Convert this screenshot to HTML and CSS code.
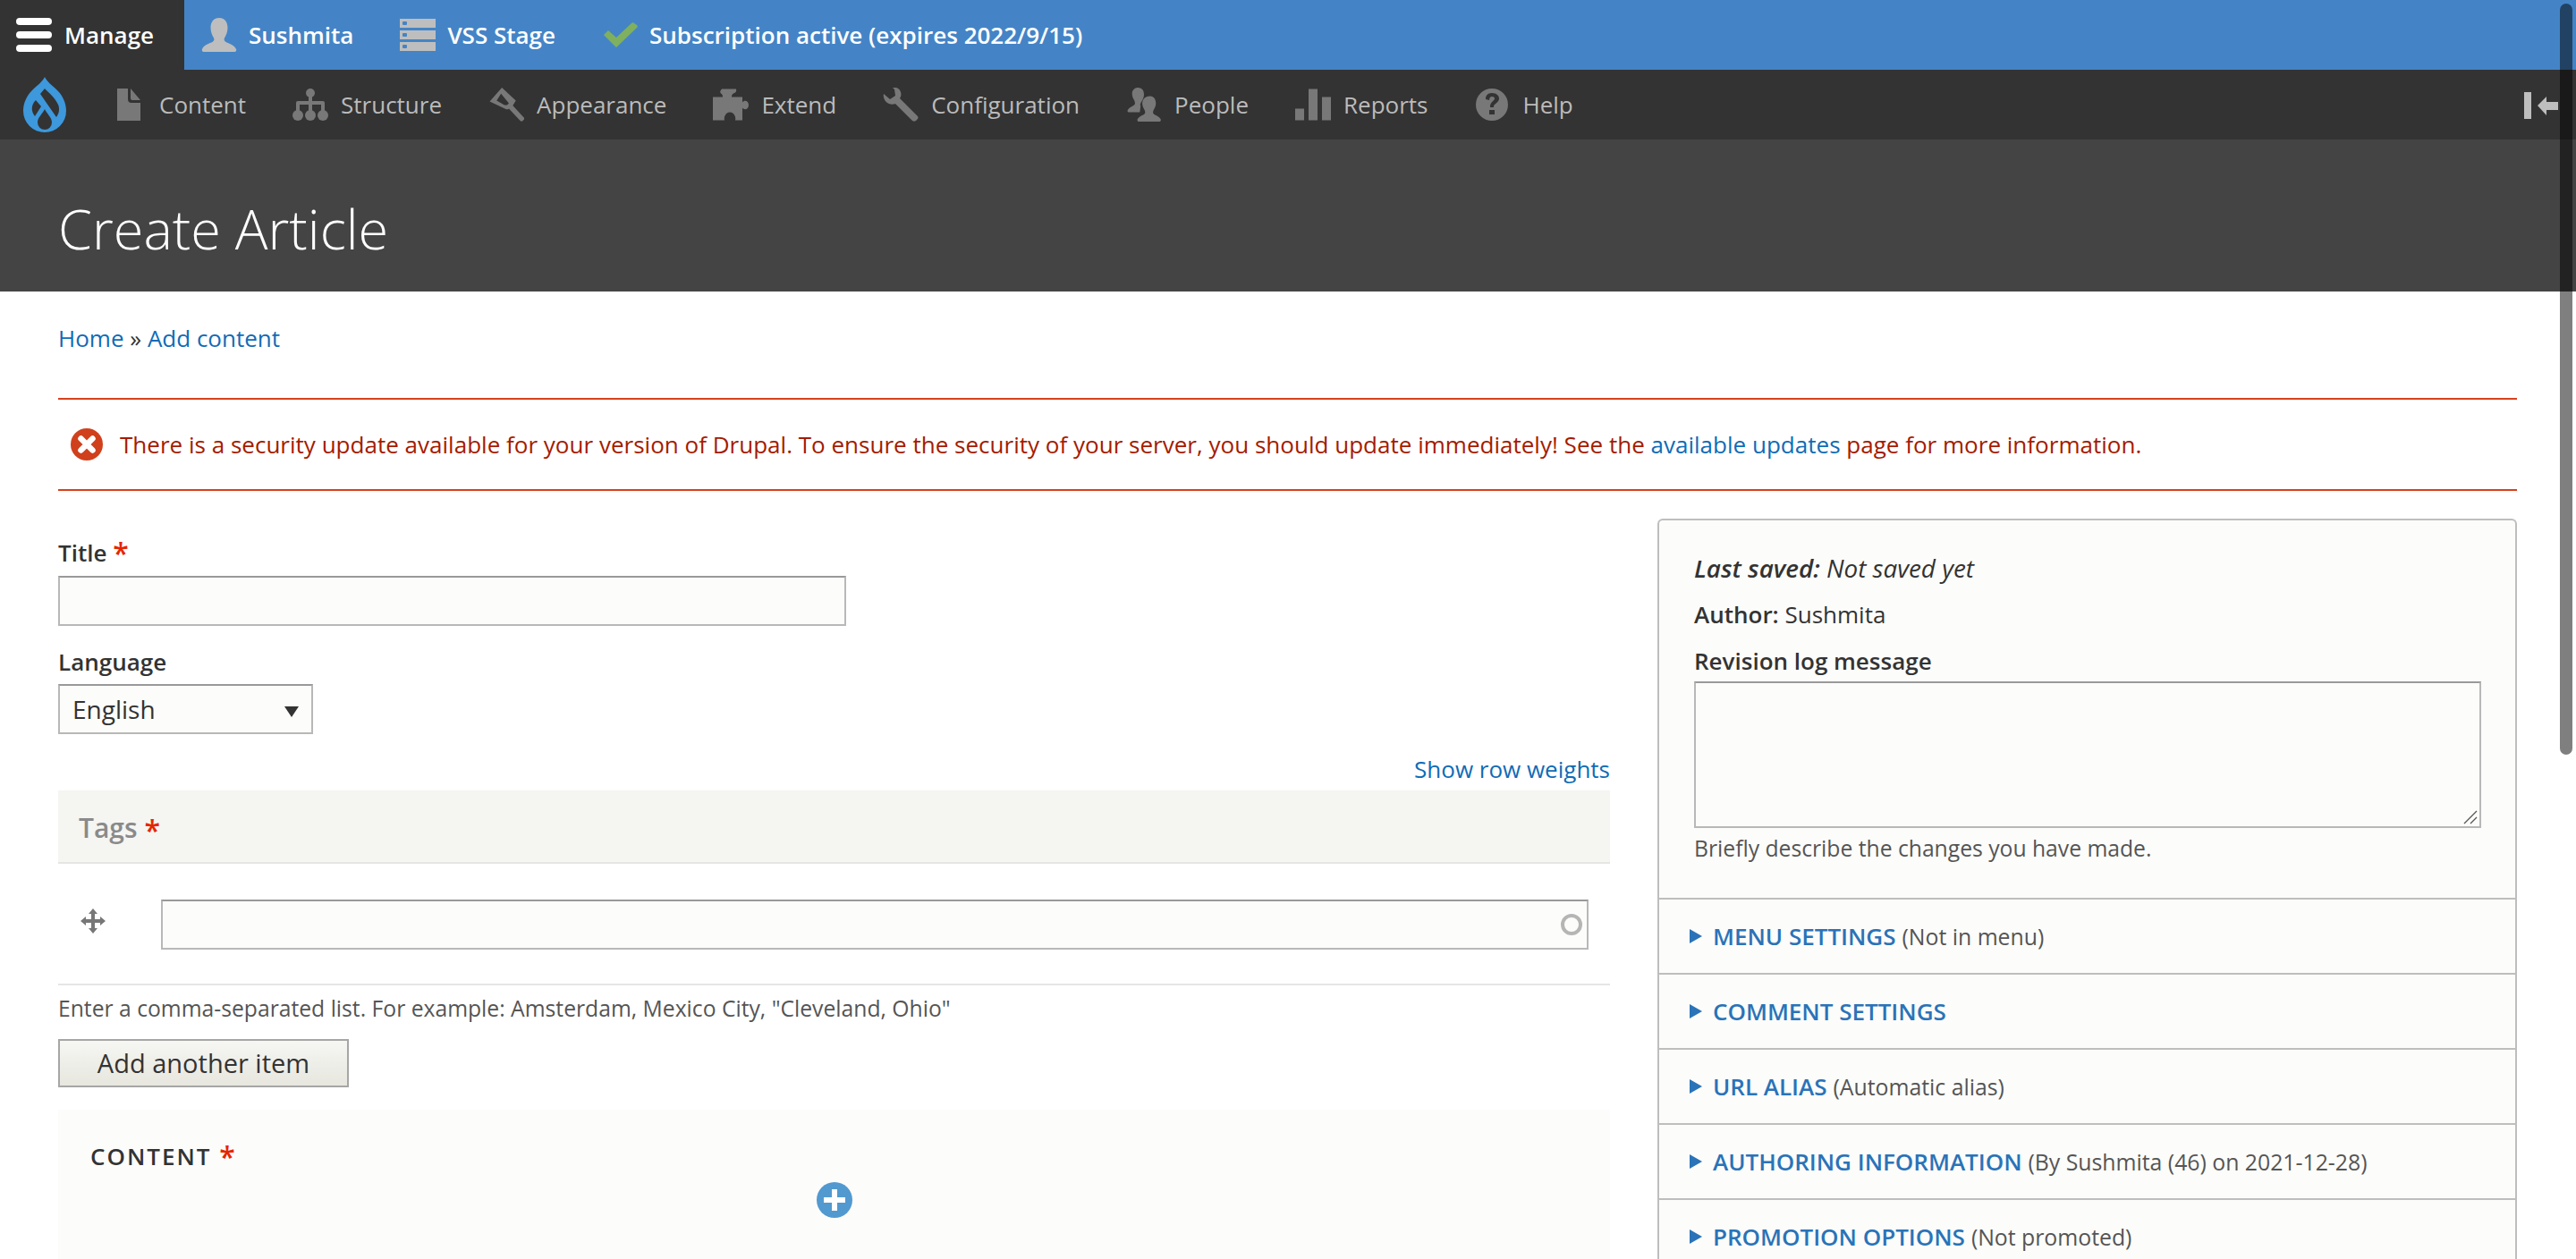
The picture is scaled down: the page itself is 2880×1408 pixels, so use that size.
FILE: index.html
```html
<!DOCTYPE html>
<html lang="en">
<head>
<meta charset="utf-8">
<title>Create Article</title>
<link rel="stylesheet" href="styles.css">
</head>
<body>
<div class="app">
  <div class="topbar">
    <a class="manage">
      <svg class="ico-burger" viewBox="0 0 40 38"><rect y="0" width="40" height="8" rx="4"/><rect y="15" width="40" height="8" rx="4"/><rect y="30" width="40" height="8" rx="4"/></svg>
      <span>Manage</span>
    </a>
    <a class="top-item top-user">
      <svg class="ico-top" viewBox="0 0 40 38"><path d="M20 0c6 0 9.500 4.500 9.500 11 0 5-2 9-3.500 11.500-1 2 0 4 2.500 5 4 1.500 9 3.500 10.500 7.500.5 1.500 0 3-1.500 3H2.500c-1.500 0-2-1.500-1.500-3 1.500-4 6.500-6 10.500-7.500 2.500-1 3.500-3 2.500-5C12.500 20 10.500 16 10.500 11 10.500 4.500 14 0 20 0z"/></svg>
      <span>Sushmita</span>
    </a>
    <a class="top-item top-stage">
      <svg class="ico-top" viewBox="0 0 40 36"><rect y="0" width="40" height="10"/><rect y="13" width="40" height="10"/><rect y="26" width="40" height="10"/><g class="srv-led"><rect x="3" y="3" width="5" height="4" rx="1"/><rect x="3" y="16" width="5" height="4" rx="1"/><rect x="3" y="29" width="5" height="4" rx="1"/></g></svg>
      <span>VSS Stage</span>
    </a>
    <a class="top-item">
      <svg class="ico-top ico-check" viewBox="0 0 40 28"><path d="M2 14l5-5 9 8L33 1c1-1 2-1 3 0l3 2c1 1 1 2 0 3L16 28z"/></svg>
      <span>Subscription active (expires 2022/9/15)</span>
    </a>
  </div>
  <div class="tray">
    <svg class="logo" viewBox="0 0 48 62">
      <path d="M24 0C26 5 32 9 38 15C44 21 48 29 48 38A24 24 0 0 1 0 38C0 29 4 21 10 15C16 9 22 5 24 0Z"/>
      <g class="logo-cut">
        <path d="M24 13C29 18 36 24 39 31C41 36 40 41 37 45L19 19Z"/>
        <path d="M14 26L20 33L13 44C9 39 8 32 14 26Z"/>
        <path d="M24 36C26 41 32 45 32 51A8 8 0 0 1 16 51C16 45 22 41 24 36Z"/>
      </g>
    </svg>
    <a class="tray-item">
      <svg class="ico-tray" viewBox="0 0 40 36"><path d="M7 0h12v12q0 4 4 4h10v20H7zM22 0l11 13H24q-2 0-2-2z"/></svg>
      <span>Content</span>
    </a>
    <a class="tray-item">
      <svg class="ico-tray" viewBox="0 0 40 36"><circle cx="20" cy="5" r="5"/><rect x="18" y="5" width="4" height="24"/><path d="M6 14h28q2 0 2 2v12h-4v-10H8v10H4V16q0-2 2-2z"/><circle cx="6" cy="30" r="6"/><circle cx="20" cy="30" r="6"/><circle cx="34" cy="30" r="6"/></svg>
      <span>Structure</span>
    </a>
    <a class="tray-item">
      <svg class="ico-tray" viewBox="0 0 40 39"><path fill-rule="evenodd" d="M15 0L31 15l-5 8-4 2-2 0L1 16zM14 7L9 15l9 5 3 0 2-2z"/><path d="M23 24l4-4 13 14c1 1 1 2 0 3l-1 1c-1 1-2 1-3 0z"/></svg>
      <span>Appearance</span>
    </a>
    <a class="tray-item">
      <svg class="ico-tray" viewBox="0 0 40 35"><path d="M10 0h16q1 4-3 5c-2 1-2 3-2 4h12v6c2-3 7-2 7 3s-5 6-7 3v14h-8c1-3-1-9-6-9s-7 6-6 9H0V9h11c0-1 0-3-2-4Q7 3 10 0z"/></svg>
      <span>Extend</span>
    </a>
    <a class="tray-item">
      <svg class="ico-tray" viewBox="0 0 40 38"><path d="M11 0c4-1 8 1 9 5 1 3 0 5-1 7l19 19c2 2 2 3 0 5l-1 1c-2 1-3 1-5-1L14 18c-3 1-6 1-9-1C2 15 0 11 1 7l7 6 6-4-1-7z"/></svg>
      <span>Configuration</span>
    </a>
    <a class="tray-item">
      <svg class="ico-tray" viewBox="0 0 40 40"><path d="M13 0c5 0 7 4 7 8 0 3-1 5-2 7-2 3-3 5-2 7l-1 7H3c-2 0-3-1-2-3 2-3 6-4 8-6 1-2 0-4-1-6-1-2-2-4-2-7 0-4 3-7 7-7z"/><path d="M27 10c5 0 7 4 7 9 0 3-2 6-3 8-1 3 0 4 2 5 3 1 6 3 7 6l-1 2H13l-1-2c1-3 4-5 7-6 2-1 3-2 2-5-1-2-3-5-3-8 0-5 3-9 9-9z"/></svg>
      <span>People</span>
    </a>
    <a class="tray-item">
      <svg class="ico-tray" viewBox="0 0 40 35"><rect y="22" width="10" height="13"/><rect x="15" width="10" height="35"/><rect x="30" y="9" width="10" height="26"/></svg>
      <span>Reports</span>
    </a>
    <a class="tray-item">
      <svg class="ico-tray" viewBox="0 0 40 36"><path fill-rule="evenodd" d="M20 0a18 18 0 1 1 0 36 18 18 0 0 1 0-36zM13 12l4 1c0-2 1-4 3-4s3 1 3 2c0 3-5 4-5 9v1h4v-1c0-3 6-4 6-9 0-3-3-6-8-6s-7 3-7 7zM17 24v5h6v-5z"/></svg>
      <span>Help</span>
    </a>
    <svg class="collapse" viewBox="0 0 38 30"><rect width="8" height="30"/><path d="M15 15l10-10v6h13v9H25v6z"/></svg>
  </div>
  <header class="pagehead"><h1>Create Article</h1></header>
  <main class="page">
    <nav class="crumbs"><a>Home</a> » <a>Add content</a></nav>
    <div class="message">
      <svg class="msg-ico" viewBox="0 0 36 36"><circle cx="18" cy="18" r="18"/><path d="M11.500 11.500L24.500 24.500M24.500 11.500L11.500 24.500" class="msg-x"/></svg>
      <span>There is a security update available for your version of Drupal. To ensure the security of your server, you should update immediately! See the <a>available updates</a> page for more information.</span>
    </div>
    <div class="columns">
      <form class="col-main">
        <label class="lbl lbl-title">Title <em class="req">*</em></label>
        <input class="field field-title" type="text">
        <label class="lbl lbl-lang">Language</label>
        <div class="select-wrap"><select class="field field-select"><option>English</option></select></div>
        <div class="weights"><a>Show row weights</a></div>
        <div class="tags-head"><span>Tags</span> <em class="req">*</em></div>
        <div class="tags-row">
          <svg class="drag" viewBox="0 0 28 28"><path d="M14 0l5 6h-3v6h6V9l6 5-6 5v-3h-6v6h3l-5 6-5-6h3v-6H6v3l-6-5 6-5v3h6V6H9z"/></svg>
          <div class="auto"><input class="field field-tag" type="text"></div>
        </div>
        <p class="help">Enter a comma-separated list. For example: Amsterdam, Mexico City, "Cleveland, Ohio"</p>
        <button class="btn" type="button">Add another item</button>
        <section class="content-panel">
          <div class="content-lbl">CONTENT <em class="req">*</em></div>
          <svg class="plus" viewBox="0 0 40 40"><circle cx="20" cy="20" r="20"/><path d="M17 8h6v9h9v6h-9v9h-6v-9H8v-6h9z"/></svg>
        </section>
      </form>
      <aside class="side">
        <div class="meta">
          <p class="meta-line meta-saved"><em><b>Last saved:</b> Not saved yet</em></p>
          <p class="meta-line"><b>Author:</b> Sushmita</p>
          <label class="meta-line meta-label">Revision log message</label>
          <div class="log-wrap">
            <textarea class="field field-log"></textarea>
            <svg class="grip" viewBox="0 0 16 16"><path d="M1 15L15 1M8 15L15 8"/></svg>
          </div>
          <p class="meta-help">Briefly describe the changes you have made.</p>
        </div>
        <div class="det"><a>MENU SETTINGS</a> <span>(Not in menu)</span></div>
        <div class="det"><a>COMMENT SETTINGS</a></div>
        <div class="det"><a>URL ALIAS</a> <span>(Automatic alias)</span></div>
        <div class="det"><a>AUTHORING INFORMATION</a> <span>(By Sushmita (46) on 2021-12-28)</span></div>
        <div class="det"><a>PROMOTION OPTIONS</a> <span>(Not promoted)</span></div>
      </aside>
    </div>
  </main>
  <div class="scrollthumb"></div>
</div>
</body>
</html>
```
FILE: styles.css
```css
* { box-sizing: border-box; }
html, body { margin: 0; padding: 0; }
body { font-family: "Open Sans", "Noto Sans", sans-serif; font-size: 26px; line-height: 36px; color: #333; background: #fff; }
a { color: #0f6cb6; text-decoration: none; }
.app { position: relative; width: 2880px; height: 1408px; overflow: hidden; }

.topbar { display: flex; height: 78px; background: #4484c6; color: #fff; font-weight: 600; }
.topbar a { color: #fff; display: flex; align-items: center; }
.manage { width: 206px; background: #333; padding-left: 18px; gap: 14px; }
.ico-burger { width: 40px; height: 38px; fill: #fff; }
.top-item { gap: 13px; margin-right: 52px; }
.top-user { margin-left: 19px; }
.ico-top { width: 40px; height: 38px; fill: #bebebe; }
.srv-led { fill: #4484c6; }
.ico-check { fill: #7fb05f; height: 28px; }

.tray { display: flex; align-items: center; height: 78px; background: #333; padding-left: 26px; position: relative; }
.logo { width: 48px; height: 62px; fill: #3d98dc; margin-right: 50px; }
.logo-cut { fill: #333; }
.tray-item { display: flex; align-items: center; gap: 14px; margin-right: 52px; color: #bbb; }
.ico-tray { width: 40px; height: 38px; fill: #787878; }
.collapse { position: absolute; left: 2822px; top: 25px; width: 38px; height: 30px; fill: #bebebe; }

.pagehead { height: 170px; background: #444; padding: 29px 65px 0; display: flex; align-items: center; }
.pagehead h1 { margin: 0; font-size: 61.2px; line-height: 72px; font-weight: 300; color: #fff; }

.page { padding: 32px 66px 0 65px; }
.crumbs { line-height: 40px; }
.message { display: flex; align-items: center; margin-top: 47px; height: 104px; border-top: 2px solid #d8401c; border-bottom: 2px solid #d8401c; color: #a51b00; padding-left: 14px; gap: 19px; font-size: 26.04px; }
.msg-ico { width: 36px; height: 36px; flex: none; fill: #d0401c; }
.msg-x { fill: none; stroke: #fff; stroke-width: 6.5; stroke-linecap: round; }

.columns { display: grid; grid-template-columns: 1735px 961px; column-gap: 53px; margin-top: 31px; }
.col-main { padding-top: 20px; display: flex; flex-direction: column; align-items: flex-start; }
.lbl { display: block; font-weight: 600; line-height: 36px; }
.req { color: #e62600; font-style: normal; font-size: 32px; line-height: 0; position: relative; top: 3px; }
.field { background: #fcfcfa; border: 2px solid #b8b8b8; border-top-color: #999; font: inherit; color: #333; border-radius: 0; margin: 0; }
.field-title { width: 881px; height: 56px; margin-top: 8px; }
.lbl-lang { margin-top: 22px; }
.select-wrap { position: relative; width: 285px; height: 56px; margin-top: 7px; }
.select-wrap::after { content: ""; position: absolute; right: 16px; top: 25px; border-left: 8px solid transparent; border-right: 8px solid transparent; border-top: 12px solid #333; }
.field-select { appearance: none; width: 100%; height: 100%; padding: 0 14px; font-size: 28px; }
.weights { width: 100%; text-align: right; margin-top: 21px; }
.tags-head { width: 100%; height: 82px; margin-top: 6px; padding: 4px 0 0 23px; background: #f5f5f2; border-bottom: 2px solid #e5e5e5; color: #8a8a8a; font-size: 30px; font-weight: 600; display: flex; align-items: center; gap: 8px; }
.tags-row { width: 100%; height: 136px; border-bottom: 2px solid #e5e5e5; display: flex; align-items: center; padding: 2px 24px 0 25px; }
.drag { width: 28px; height: 28px; fill: #777; flex: none; margin-right: 62px; margin-top: -8px; }
.auto { position: relative; flex: 1; display: flex; }
.auto::after { content: ""; box-sizing: border-box; position: absolute; right: 7px; top: 16px; width: 24px; height: 24px; border: 4px solid #b5b5b5; border-radius: 50%; }
.field-tag { width: 100%; height: 56px; }
.help { margin: 8px 0 0; color: #555; font-size: 24.7px; line-height: 36px; }
.btn { margin-top: 16px; width: 325px; height: 54px; border: 2px solid #a6a6a6; background: linear-gradient(#f6f6f3, #e7e7df); font: inherit; font-size: 29px; color: #333; padding: 0; }
.content-panel { width: 100%; height: 300px; margin-top: 25px; background: #fcfcfa; padding: 34px 36px; display: flex; flex-direction: column; }
.content-lbl { font-weight: 600; letter-spacing: 2px; line-height: 36px; }
.plus { width: 40px; height: 40px; fill: #5299d0; align-self: center; margin-top: 11px; }
.plus path { fill: #fff; }

.side { background: #fcfcfa; border: 2px solid #bebebe; border-bottom: 0; border-radius: 6px 6px 0 0; }
.meta { padding: 35px 36px 0 39px; height: 422px; }
.meta-line { display: block; margin: 0 0 16px; line-height: 36px; }
.meta-saved { font-size: 27.8px; }
b, .meta-label { font-weight: 600; }
.meta-label { margin: 0; }
.log-wrap { position: relative; margin-top: 5px; }
.field-log { display: block; width: 880px; height: 164px; resize: none; }
.grip { position: absolute; left: 860px; top: 144px; width: 16px; height: 16px; fill: none; stroke: #555; stroke-width: 1.3; }
.meta-help { margin: 5px 0 0; color: #555; font-size: 24.7px; }
.det { height: 84px; border-top: 2px solid #bebebe; padding-left: 60px; display: flex; align-items: center; gap: 7px; position: relative; color: #555; }
.det span { font-size: 24.8px; }
.det::before { content: ""; position: absolute; left: 34px; top: 33px; border-top: 8px solid transparent; border-bottom: 8px solid transparent; border-left: 14px solid #2a73b8; }
.det a { font-weight: 600; color: #2a73b8; }

.scrollthumb { position: absolute; left: 2862px; top: 4px; width: 14px; height: 840px; border-radius: 7px; background: rgba(0, 0, 0, .5); }
```
